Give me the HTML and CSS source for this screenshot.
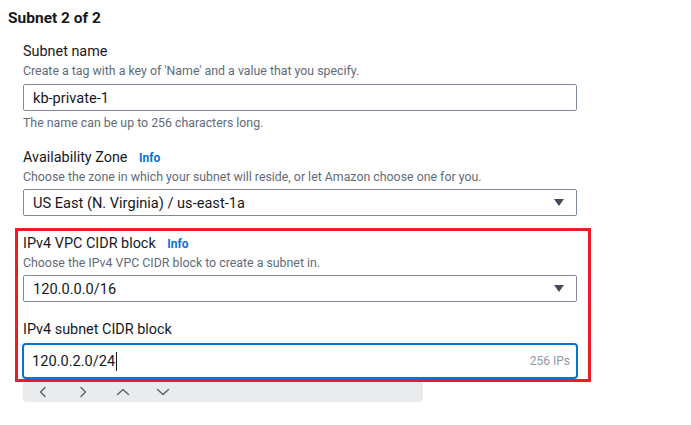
FILE: index.html
```html
<!DOCTYPE html>
<html lang="en">
<head>
<meta charset="utf-8">
<title>Subnet 2 of 2</title>
<link rel="stylesheet" href="styles.css">
</head>
<body>
<main class="page">
  <h2 class="title">Subnet 2 of 2</h2>
  <div class="form">
    <div class="field">
      <div class="label">Subnet name</div>
      <div class="desc">Create a tag with a key of 'Name' and a value that you specify.</div>
      <div class="input">kb-private-1</div>
      <div class="hint">The name can be up to 256 characters long.</div>
    </div>

    <div class="field field-az">
      <div class="label">Availability Zone <span class="info">Info</span></div>
      <div class="desc">Choose the zone in which your subnet will reside, or let Amazon choose one for you.</div>
      <div class="input select"><span>US East (N. Virginia) / us-east-1a</span><span class="caret"></span></div>
    </div>

    <div class="highlight">
      <div class="field">
        <div class="label">IPv4 VPC CIDR block <span class="info">Info</span></div>
        <div class="desc">Choose the IPv4 VPC CIDR block to create a subnet in.</div>
        <div class="input select"><span>120.0.0.0/16</span><span class="caret"></span></div>
      </div>
      <div class="field field-cidr">
        <div class="label">IPv4 subnet CIDR block</div>
        <div class="input focused"><span class="val">120.0.2.0/24<span class="cursor"></span></span><span class="count">256 IPs</span></div>
      </div>
    </div>

    <div class="toolbar">
      <svg class="tb-icon" width="16" height="16" viewBox="0 0 16 16"><path d="M10 3.5 5.5 8l4.5 4.5"/></svg>
      <svg class="tb-icon" width="16" height="16" viewBox="0 0 16 16"><path d="M6 3.5 10.5 8 6 12.5"/></svg>
      <svg class="tb-icon" width="16" height="16" viewBox="0 0 16 16"><path d="M2.5 10.5 8 5.5l5.5 5"/></svg>
      <svg class="tb-icon" width="16" height="16" viewBox="0 0 16 16"><path d="M2.5 5.5 8 10.5l5.5-5"/></svg>
    </div>
  </div>
</main>
</body>
</html>
```

FILE: styles.css
```css
* { box-sizing: border-box; }

body {
  margin: 0;
  background: #ffffff;
  font-family: Roboto, "Liberation Sans", Arial, sans-serif;
  color: #16191f;
}

.page {
  padding: 8px 0 0 8px;
}

.title {
  margin: 0;
  font-size: 15.5px;
  line-height: 20px;
  font-weight: 700;
  color: #16191f;
}

.form {
  width: 569px;
  padding: 14px 0 0 15px;
}

.field {
  display: flex;
  flex-direction: column;
}

.field-az {
  margin-top: 17px;
}

.label {
  font-size: 14.4px;
  line-height: 20px;
  color: #16191f;
}

.info {
  margin-left: 8px;
  font-size: 12px;
  line-height: 1;
  font-weight: 700;
  color: #0972d3;
}

.desc {
  margin-top: 1px;
  font-size: 12.35px;
  line-height: 16px;
  color: #5f6b7a;
}

.hint {
  margin-top: 4px;
  font-size: 12.35px;
  line-height: 16px;
  color: #5f6b7a;
}

.input {
  margin-top: 5px;
  height: 27px;
  border: 1px solid #7d8998;
  border-radius: 2px;
  padding: 0 12px 0 9px;
  display: flex;
  align-items: center;
  font-size: 14.6px;
  color: #16191f;
}

.select {
  margin-top: 4px;
  justify-content: space-between;
}

.caret {
  width: 0;
  height: 0;
  border-left: 5px solid transparent;
  border-right: 5px solid transparent;
  border-top: 7px solid #414d5c;
}

.highlight {
  margin: 12px -14px 0 -8px;
  border: 3px solid #ed1c24;
  padding: 3px 11px 0 5px;
}

.field-cidr {
  margin-top: 18px;
}

.field-cidr .label {
  margin-bottom: 3px;
}

.focused {
  margin: 0 -1px;
  height: 36px;
  border: 2px solid #0972d3;
  border-radius: 4px;
  padding: 0 6px 0 8px;
  justify-content: space-between;
}

.val {
  display: flex;
  align-items: center;
}

.cursor {
  display: inline-block;
  width: 1px;
  height: 19px;
  margin-left: 1px;
  background: #16191f;
}

.count {
  font-size: 12px;
  color: #8d99a8;
}

.toolbar {
  width: 400px;
  height: 20px;
  background: #e9ebed;
  border-radius: 0 0 4px 4px;
  display: flex;
  align-items: center;
  gap: 24px;
  padding-left: 12px;
}

.tb-icon {
  fill: none;
  stroke: #5f6b7a;
  stroke-width: 1.6;
  stroke-linecap: round;
  stroke-linejoin: round;
}
```
